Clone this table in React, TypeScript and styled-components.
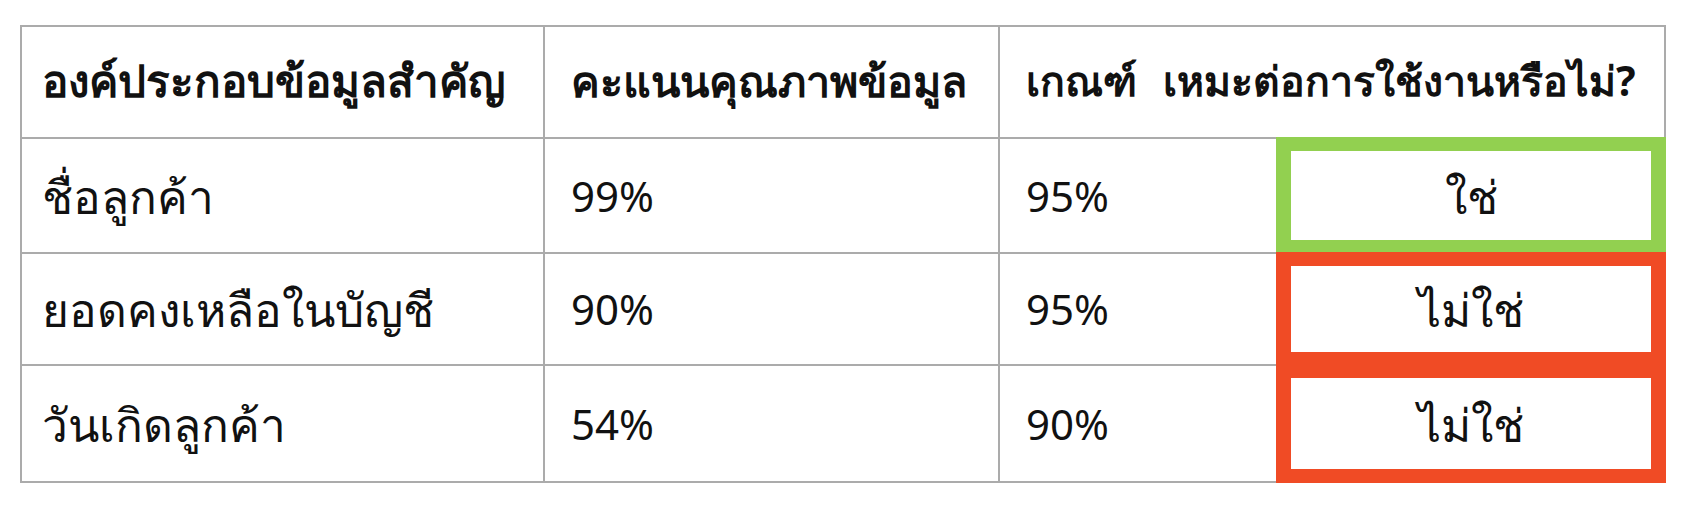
import React from "react";
import styled, { createGlobalStyle } from "styled-components";

const GlobalStyle = createGlobalStyle`
  html, body {
    margin: 0;
    padding: 0;
    background: #ffffff;
  }
  body {
    font-family: "Noto Sans", "DejaVu Sans", sans-serif;
    color: #111111;
  }
`;

const Page = styled.div`
  padding: 25px 0 0 20px;
`;

const Table = styled.div`
  display: grid;
  grid-template-columns: 523px 455px 276px 388px;
  grid-template-rows: 112px 115px 112px 115px;
  width: 1642px;
  border: 2px solid #ababab;
  background: #ffffff;
`;

const Cell = styled.div<{ $divider?: boolean; $last?: boolean; $pad?: number }>`
  display: flex;
  align-items: center;
  padding-left: ${(p) => p.$pad ?? 26}px;
  border-right: ${(p) => (p.$divider ? "2px solid #ababab" : "none")};
  border-bottom: ${(p) => (p.$last ? "none" : "2px solid #ababab")};
  line-height: 1;
  white-space: nowrap;
`;

const HeadCell = styled(Cell)<{ $span?: number }>`
  font-weight: 700;
  grid-column: span ${(p) => p.$span ?? 1};
  gap: 26px;
  padding-bottom: 4px;
`;

const Text = styled.span<{ $size: number }>`
  font-size: ${(p) => p.$size}px;
`;

const FitCell = styled.div<{ $ok: boolean; $last?: boolean }>`
  position: relative;
  z-index: 1;
  display: flex;
  padding: 14px 15px;
  margin: -2px -2px ${(p) => (p.$last ? "-2px" : "0")} 0;
  background: ${(p) => (p.$ok ? "#92d050" : "#f04b25")};
`;

const FitLabel = styled.div`
  flex: 1;
  display: flex;
  align-items: center;
  justify-content: center;
  background: #ffffff;
  font-size: 46px;
  line-height: 1;
`;

const rows = [
  { name: "ชื่อลูกค้า", score: "99%", target: "95%", ok: true },
  { name: "ยอดคงเหลือในบัญชี", score: "90%", target: "95%", ok: false },
  { name: "วันเกิดลูกค้า", score: "54%", target: "90%", ok: false },
];

const App = () => {
  return (
    <Page>
      <GlobalStyle />
      <Table>
        <HeadCell $divider $pad={20}>
          <Text $size={44}>องค์ประกอบข้อมูลสำคัญ</Text>
        </HeadCell>
        <HeadCell $divider>
          <Text $size={43}>คะแนนคุณภาพข้อมูล</Text>
        </HeadCell>
        <HeadCell $span={2}>
          <Text $size={41}>เกณฑ์</Text>
          <Text $size={41}>เหมะต่อการใช้งานหรือไม่?</Text>
        </HeadCell>
        {rows.map((r, i) => {
          const last = i === rows.length - 1;
          return (
            <React.Fragment key={r.name}>
              <Cell $divider $last={last} $pad={20}>
                <Text $size={46}>{r.name}</Text>
              </Cell>
              <Cell $divider $last={last}>
                <Text $size={42}>{r.score}</Text>
              </Cell>
              <Cell $last={last}>
                <Text $size={42}>{r.target}</Text>
              </Cell>
              <FitCell $ok={r.ok} $last={last}>
                <FitLabel>{r.ok ? "ใช่" : "ไม่ใช่"}</FitLabel>
              </FitCell>
            </React.Fragment>
          );
        })}
      </Table>
    </Page>
  );
};

export default App;
